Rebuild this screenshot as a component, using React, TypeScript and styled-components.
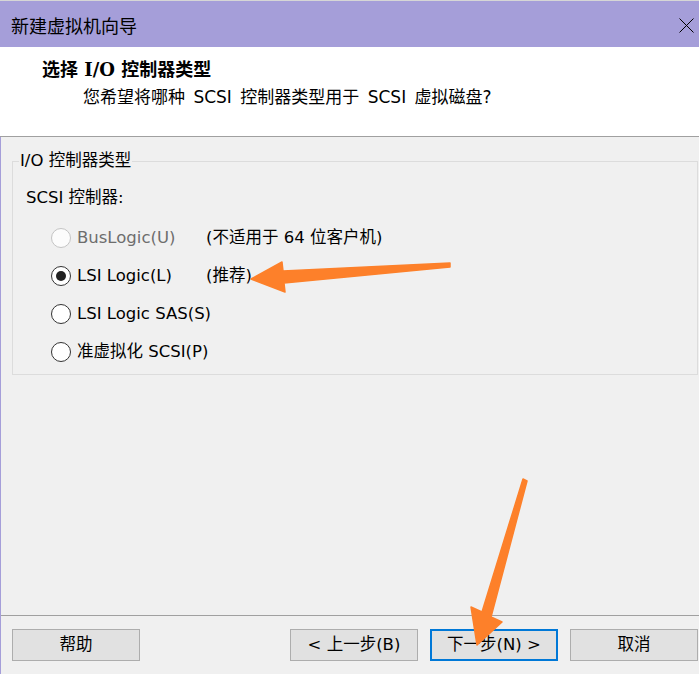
import React from "react";
import styled, { createGlobalStyle } from "styled-components";

const GlobalStyle = createGlobalStyle`
  html, body {
    margin: 0;
    padding: 0;
    background: #f0f0f0;
  }
  body {
    font-family: "DejaVu Sans", "Noto Sans CJK SC", sans-serif;
    font-size: 16.5px;
    color: #000;
  }
  * {
    box-sizing: border-box;
  }
`;

const Window = styled.div`
  position: relative;
  width: 699px;
  height: 674px;
  display: flex;
  flex-direction: column;
  background: #f0f0f0;
  overflow: hidden;
`;

const TitleBar = styled.div`
  height: 47px;
  border-top: 1px solid #d6d6d6;
  background: #a59ed9;
  display: flex;
  align-items: center;
  justify-content: space-between;
  padding: 2px 5px 0 11px;
  font-family: "Noto Sans CJK SC", sans-serif;
  font-size: 18px;
  line-height: 24px;
`;

const Header = styled.div`
  height: 90px;
  background: #fff;
  border-bottom: 1px solid #a0a0a0;
  padding-top: 11px;
`;

const HeaderTitle = styled.div`
  padding-left: 42px;
  font-family: "DejaVu Serif", "Noto Sans CJK SC", serif;
  font-weight: bold;
  font-size: 18px;
  line-height: 24px;
`;

const HeaderText = styled.div`
  margin-top: 3px;
  padding-left: 83px;
  font-size: 17px;
  line-height: 24px;
  word-spacing: 3px;
`;

const Body = styled.div`
  flex: 1;
  border-left: 1px solid #a59ed9;
  display: flex;
  flex-direction: column;
`;

const Content = styled.div`
  flex: 1;
`;

const GroupBox = styled.fieldset`
  margin: 14px 1px 0 11px;
  padding: 17px 0 3px 6px;
  border: 1px solid #dcdcdc;
  min-width: 0;
`;

const Legend = styled.legend`
  padding: 0 1px;
  line-height: 20px;
`;

const Caption = styled.div`
  margin-left: 7px;
  line-height: 20px;
`;

const OptionList = styled.div`
  margin-top: 11px;
`;

const OptionRow = styled.div`
  height: 38px;
  display: grid;
  grid-template-columns: 155px auto;
  align-items: center;
  padding-left: 32px;
`;

const Choice = styled.label<{ $disabled?: boolean }>`
  display: flex;
  align-items: center;
  gap: 6px;
  color: ${(p) => (p.$disabled ? "#6d6d6d" : "#000")};
  line-height: 20px;
  white-space: nowrap;
`;

const Radio = styled.span<{ $checked?: boolean; $disabled?: boolean }>`
  width: 20px;
  height: 20px;
  flex: none;
  border-radius: 50%;
  border: 1px solid ${(p) => (p.$disabled ? "#c4c4c4" : "#333")};
  background: ${(p) => (p.$disabled ? "#fcfcfc" : "#fff")};
  display: flex;
  align-items: center;
  justify-content: center;

  &::after {
    content: "";
    display: ${(p) => (p.$checked ? "block" : "none")};
    width: 10px;
    height: 10px;
    border-radius: 50%;
    background: #222;
  }
`;

const Note = styled.span`
  line-height: 20px;
  white-space: nowrap;
`;

const Footer = styled.div`
  height: 59px;
  border-top: 1px solid #a0a0a0;
  display: flex;
  align-items: flex-start;
  padding: 13px 1px 0 11px;
`;

const Spacer = styled.div`
  flex: 1;
`;

const ButtonGroup = styled.div`
  display: flex;
  gap: 12px;
`;

const Button = styled.button<{ $default?: boolean }>`
  width: 128px;
  height: 32px;
  margin: 0;
  padding: 0;
  background: #e1e1e1;
  border: ${(p) => (p.$default ? "2px solid #0078d7" : "1px solid #adadad")};
  font-family: "DejaVu Sans", "Noto Sans CJK SC", sans-serif;
  font-size: 16.5px;
  color: #000;
  line-height: 20px;
`;

const Overlay = styled.svg`
  position: absolute;
  left: 0;
  top: 0;
  pointer-events: none;
`;

const options = [
  { label: "BusLogic(U)", note: "(不适用于 64 位客户机)", disabled: true },
  { label: "LSI Logic(L)", note: "(推荐)", checked: true },
  { label: "LSI Logic SAS(S)" },
  { label: "准虚拟化 SCSI(P)" },
];

export default function App() {
  return (
    <>
      <GlobalStyle />
      <Window>
        <TitleBar>
          <span>新建虚拟机向导</span>
          <svg width="15" height="15" viewBox="0 0 15 15">
            <path d="M0.5 0.5 L14.5 14.5 M14.5 0.5 L0.5 14.5" stroke="#000" strokeWidth="1" />
          </svg>
        </TitleBar>
        <Header>
          <HeaderTitle>选择 I/O 控制器类型</HeaderTitle>
          <HeaderText>您希望将哪种 SCSI 控制器类型用于 SCSI 虚拟磁盘?</HeaderText>
        </Header>
        <Body>
          <Content>
            <GroupBox>
              <Legend>I/O 控制器类型</Legend>
              <Caption>SCSI 控制器:</Caption>
              <OptionList>
                {options.map((o) => (
                  <OptionRow key={o.label}>
                    <Choice $disabled={o.disabled}>
                      <Radio $checked={o.checked} $disabled={o.disabled} />
                      {o.label}
                    </Choice>
                    {o.note && <Note>{o.note}</Note>}
                  </OptionRow>
                ))}
              </OptionList>
            </GroupBox>
          </Content>
          <Footer>
            <Button>帮助</Button>
            <Spacer />
            <ButtonGroup>
              <Button>&lt; 上一步(B)</Button>
              <Button $default>下一步(N) &gt;</Button>
              <Button>取消</Button>
            </ButtonGroup>
          </Footer>
        </Body>
        <Overlay width="699" height="674" viewBox="0 0 699 674">
          <polygon
            points="450,263 283,271 282,262 251,279 285,292 284,283 450,267"
            fill="#fd802a"
            stroke="#fd802a"
            strokeWidth="1.5"
            strokeLinejoin="round"
          />
          <polygon
            points="523,479 482,612 471,607 477,645 502,622 491,617 527,481"
            fill="#fd802a"
            stroke="#fd802a"
            strokeWidth="1.5"
            strokeLinejoin="round"
          />
        </Overlay>
      </Window>
    </>
  );
}
